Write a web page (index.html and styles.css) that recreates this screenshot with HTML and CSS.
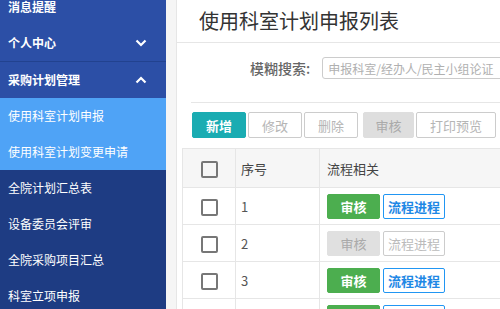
FILE: index.html
```html
<!DOCTYPE html>
<html lang="zh-CN">
<head>
    <meta charset="UTF-8">
    <meta name="viewport" content="width=device-width, initial-scale=1.0">
    <title>使用科室计划申报列表</title>
    <link rel="stylesheet" href="styles.css">
</head>
<body>
    <div class="sidebar">
        <ul class="menu">
            <li class="menu-head">消息提醒</li>
            <li class="menu-head split">个人中心
                <svg class="chev" width="12" height="8" viewBox="0 0 12 8"><path d="M1.5 1.5 L6 6 L10.5 1.5" fill="none" stroke="#fff" stroke-width="2.2"/></svg>
            </li>
            <li class="menu-head">采购计划管理
                <svg class="chev" width="12" height="8" viewBox="0 0 12 8"><path d="M1.5 6.5 L6 2 L10.5 6.5" fill="none" stroke="#fff" stroke-width="2.2"/></svg>
            </li>
            <li class="menu-sub active">使用科室计划申报</li>
            <li class="menu-sub active">使用科室计划变更申请</li>
            <li class="menu-sub">全院计划汇总表</li>
            <li class="menu-sub">设备委员会评审</li>
            <li class="menu-sub">全院采购项目汇总</li>
            <li class="menu-sub">科室立项申报</li>
        </ul>
    </div>
    <div class="gutter"></div>
    <div class="panel">
        <div class="panel-title">使用科室计划申报列表</div>
        <div class="search">
            <label>模糊搜索:</label>
            <input type="text" placeholder="申报科室/经办人/民主小组论证">
        </div>
        <div class="toolbar">
            <button class="btn btn-add">新增</button>
            <button class="btn">修改</button>
            <button class="btn">删除</button>
            <button class="btn btn-gray">审核</button>
            <button class="btn btn-wide">打印预览</button>
        </div>
        <table class="grid">
            <tr>
                <th class="col-check"><span class="box"></span></th>
                <th class="col-num">序号</th>
                <th>流程相关</th>
            </tr>
            <tr>
                <td class="col-check"><span class="box"></span></td>
                <td class="col-num">1</td>
                <td><button class="op op-green">审核</button><button class="op op-line">流程进程</button></td>
            </tr>
            <tr>
                <td class="col-check"><span class="box"></span></td>
                <td class="col-num">2</td>
                <td><button class="op op-off">审核</button><button class="op op-line-off">流程进程</button></td>
            </tr>
            <tr>
                <td class="col-check"><span class="box"></span></td>
                <td class="col-num">3</td>
                <td><button class="op op-green">审核</button><button class="op op-line">流程进程</button></td>
            </tr>
            <tr>
                <td class="col-check"><span class="box"></span></td>
                <td class="col-num">4</td>
                <td><button class="op op-green">审核</button><button class="op op-line">流程进程</button></td>
            </tr>
        </table>
    </div>
</body>
</html>
```

FILE: styles.css
```css
/* General styling */
body {
    font-family: "Noto Sans CJK SC", "Noto Sans", sans-serif;
    margin: 0;
    padding: 0;
    display: flex;
    height: 309px;
    overflow: hidden;
    background-color: #fff;
    color: #555;
}
/* Sidebar */
.sidebar {
    width: 166px;
    flex-shrink: 0;
    background-color: #1e3c83;
    overflow: hidden;
}
.menu {
    list-style: none;
    margin: -11px 0 0 0;
    padding: 0;
}
.menu li {
    height: 36px;
    line-height: 36px;
    padding-left: 8px;
    font-size: 12px;
    color: #fff;
    white-space: nowrap;
}
.menu-head {
    background-color: #2c4fa6;
    font-weight: bold;
    display: flex;
    align-items: center;
    justify-content: space-between;
    padding-right: 19px;
}
.menu-head.split {
    border-bottom: 1px solid #22428f;
}
.chev {
    display: block;
}
.menu-sub {
    background-color: #1e3c83;
}
.menu-sub.active {
    background-color: #4fa3f6;
}
.gutter {
    width: 10px;
    flex-shrink: 0;
    background-color: #f5f5f5;
    border-right: 1px solid #e6e6e6;
}
/* Main panel */
.panel {
    flex: 1;
    min-width: 0;
}
.panel-title {
    height: 42px;
    line-height: 42px;
    padding-left: 22px;
    font-size: 20px;
    color: #333;
    border-bottom: 1px solid #e6e6e6;
    white-space: nowrap;
}
.search {
    margin-left: 14px;
    padding: 14px 0 0 59px;
    height: 45px;
    border-bottom: 1px solid #e6e6e6;
    display: flex;
    align-items: flex-start;
    white-space: nowrap;
}
.search label {
    font-size: 14px;
    font-weight: 500;
    color: #666;
    line-height: 22px;
    margin-right: 12px;
}
.search input {
    width: 300px;
    flex-shrink: 0;
    height: 22px;
    box-sizing: border-box;
    border: 1px solid #ccc;
    border-radius: 3px;
    padding: 0 5px;
    font-family: inherit;
    font-size: 12px;
}
.search input::placeholder {
    color: #b0b0b0;
}
.toolbar {
    display: flex;
    gap: 2px;
    padding: 9px 0 0 15px;
    white-space: nowrap;
}
.btn {
    width: 54px;
    height: 26px;
    border: 1px solid #ccc;
    border-radius: 2px;
    background-color: #fff;
    color: #b5b5b5;
    font-family: inherit;
    font-size: 13px;
    padding: 0;
    flex-shrink: 0;
}
.btn-add {
    background-color: #1aacb2;
    border-color: #1aacb2;
    color: #fff;
    font-weight: bold;
}
.btn-gray {
    background-color: #dedede;
    border-color: #dedede;
    color: #aaa;
    margin-left: 3px;
    width: 51px;
}
.btn-wide {
    width: 80px;
}
/* Table */
.grid {
    margin: 10px 0 0 5px;
    border-collapse: collapse;
    width: 500px;
    font-size: 13px;
    color: #555;
}
.grid th, .grid td {
    border: 1px solid #e6e6e6;
    height: 36px;
    padding: 0;
    text-align: left;
}
.grid th {
    background-color: #f6f6f6;
    height: 38px;
    font-weight: normal;
    color: #444;
}
.col-check {
    width: 52px;
    text-align: center !important;
}
.col-num {
    width: 78px;
    padding-left: 5px !important;
}
.grid td:last-child, .grid th:last-child {
    padding-left: 7px;
}
.box {
    display: inline-block;
    width: 13px;
    height: 13px;
    border: 2px solid #777;
    border-radius: 2px;
    vertical-align: middle;
}
.op {
    height: 25px;
    font-family: inherit;
    font-size: 13px;
    font-weight: bold;
    border-radius: 2px;
    padding: 0;
    vertical-align: middle;
}
.op-green {
    width: 53px;
    background-color: #4cae4f;
    border: 1px solid #4cae4f;
    color: #fff;
    margin-right: 3px;
}
.op-off {
    width: 53px;
    background-color: #e0e0e0;
    border: 1px solid #e0e0e0;
    color: #aaa;
    font-weight: normal;
    margin-right: 3px;
}
.op-line {
    width: 62px;
    background-color: #fff;
    border: 1px solid #2196f3;
    color: #1e88e5;
}
.op-line-off {
    width: 62px;
    background-color: #fff;
    border: 1px solid #ccc;
    color: #bbb;
    font-weight: normal;
}
```
